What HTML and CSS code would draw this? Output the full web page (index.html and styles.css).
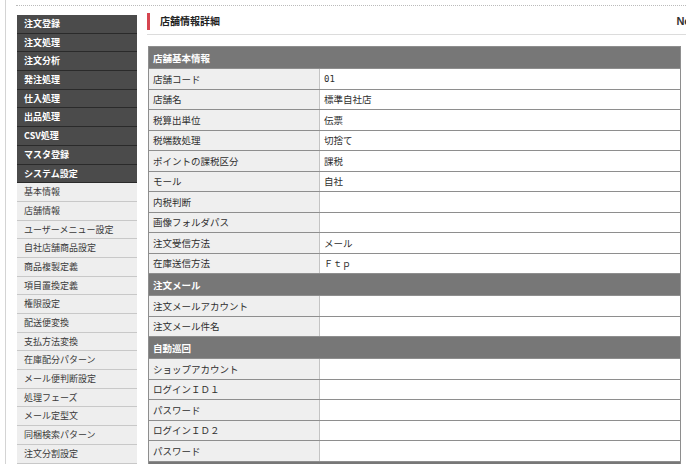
FILE: index.html
```html
<!DOCTYPE html>
<html lang="ja">
<head>
  <meta charset="UTF-8">
  <meta name="viewport" content="width=device-width, initial-scale=1.0">
  <title>店舗情報詳細</title>
  <link rel="stylesheet" href="styles.css">
</head>
<body>
  <div class="frame">
    <div class="topline"></div>
    <div class="layout">
      <ul class="sidebar">
        <li class="group">注文登録</li>
        <li class="group">注文処理</li>
        <li class="group">注文分析</li>
        <li class="group">発注処理</li>
        <li class="group">仕入処理</li>
        <li class="group">出品処理</li>
        <li class="group">CSV処理</li>
        <li class="group">マスタ登録</li>
        <li class="group">システム設定</li>
        <li>基本情報</li>
        <li>店舗情報</li>
        <li>ユーザーメニュー設定</li>
        <li>自社店舗商品設定</li>
        <li>商品複製定義</li>
        <li>項目置換定義</li>
        <li>権限設定</li>
        <li>配送便変換</li>
        <li>支払方法変換</li>
        <li>在庫配分パターン</li>
        <li>メール便判断設定</li>
        <li>処理フェーズ</li>
        <li>メール定型文</li>
        <li>同梱検索パターン</li>
        <li>注文分割設定</li>
      </ul>

      <div class="main">
        <div class="heading">
          <h1>店舗情報詳細</h1>
          <span class="heading-link">New</span>
        </div>

        <table class="detail">
          <tr><th colspan="2">店舗基本情報</th></tr>
          <tr><td class="label">店舗コード</td><td class="mono">01</td></tr>
          <tr><td class="label">店舗名</td><td>標準自社店</td></tr>
          <tr><td class="label">税算出単位</td><td>伝票</td></tr>
          <tr><td class="label">税端数処理</td><td>切捨て</td></tr>
          <tr><td class="label">ポイントの課税区分</td><td>課税</td></tr>
          <tr><td class="label">モール</td><td>自社</td></tr>
          <tr><td class="label">内税判断</td><td></td></tr>
          <tr><td class="label">画像フォルダパス</td><td></td></tr>
          <tr><td class="label">注文受信方法</td><td>メール</td></tr>
          <tr><td class="label">在庫送信方法</td><td class="mono">Ｆｔｐ</td></tr>
          <tr><th colspan="2">注文メール</th></tr>
          <tr><td class="label">注文メールアカウント</td><td></td></tr>
          <tr><td class="label">注文メール件名</td><td></td></tr>
          <tr><th colspan="2">自動巡回</th></tr>
          <tr><td class="label">ショップアカウント</td><td></td></tr>
          <tr><td class="label">ログインＩＤ１</td><td></td></tr>
          <tr><td class="label">パスワード</td><td></td></tr>
          <tr><td class="label">ログインＩＤ２</td><td></td></tr>
          <tr><td class="label">パスワード</td><td></td></tr>
          <tr><th colspan="2">その他</th></tr>
        </table>
      </div>
    </div>
  </div>
</body>
</html>
```

FILE: styles.css
```css
html, body {
  margin: 0;
  height: 100%;
  overflow: hidden;
}

body {
  font-family: "Noto Sans CJK JP", "Noto Sans", sans-serif;
  color: #333;
  background-color: #fff;
}

.frame {
  margin-left: 5px;
  padding-left: 10px;
  border-left: 1px solid #d4d4d4;
  min-height: 100%;
}

.topline {
  height: 5px;
  border-bottom: 1px dotted #bbb;
}

.layout {
  display: flex;
  gap: 10px;
  margin-top: 7px;
  padding-left: 1px;
}

/* side menu */
.sidebar {
  list-style: none;
  margin: 2px 0 0 0;
  padding: 0;
  width: 120px;
  flex-shrink: 0;
}

.sidebar li {
  box-sizing: border-box;
  height: 18.7px;
  line-height: 17.7px;
  padding-left: 7px;
  font-size: 9px;
  color: #3a3a3a;
  background-color: #eeeeee;
  border-bottom: 1px solid #c8c8c8;
  white-space: nowrap;
}

.sidebar li.group {
  color: #fff;
  font-weight: bold;
  background-color: #4b4b4b;
  border-bottom: 1px solid #2a2a2a;
}

/* main column */
.main {
  flex: 1;
  min-width: 0;
}

.heading {
  display: flex;
  justify-content: space-between;
  align-items: flex-start;
  padding-bottom: 4px;
  border-bottom: 1px solid #dcdcdc;
}

.heading h1 {
  margin: 0;
  height: 17px;
  line-height: 16px;
  padding-left: 10px;
  border-left: 3px solid #d64550;
  font-size: 10px;
  font-weight: bold;
  color: #222;
}

.heading-link {
  margin-right: -13px;
  font-family: "Liberation Sans", sans-serif;
  font-size: 11px;
  font-weight: bold;
  line-height: 16px;
  color: #333;
}

/* detail table */
.detail {
  margin-top: 11px;
  margin-left: 1px;
  width: 533px;
  border-collapse: collapse;
  border: 1px solid #8e8e8e;
  font-size: 9.5px;
}

.detail th {
  height: 21px;
  padding: 0 0 0 4px;
  text-align: left;
  font-weight: bold;
  color: #fff;
  background-color: #777;
  border-top: 1px solid #8e8e8e;
  border-bottom: 1px solid #8e8e8e;
}

.detail td {
  height: 19.5px;
  padding: 0 0 0 4px;
  color: #2e2e2e;
  background-color: #fff;
  border-bottom: 1px solid #8e8e8e;
}

.detail td.label {
  width: 166px;
  background-color: #efefef;
  border-right: 1px solid #c4c4c4;
}

.detail td.mono {
  font-family: "DejaVu Sans Mono", "Noto Sans CJK JP", monospace;
  font-size: 9px;
}
```
